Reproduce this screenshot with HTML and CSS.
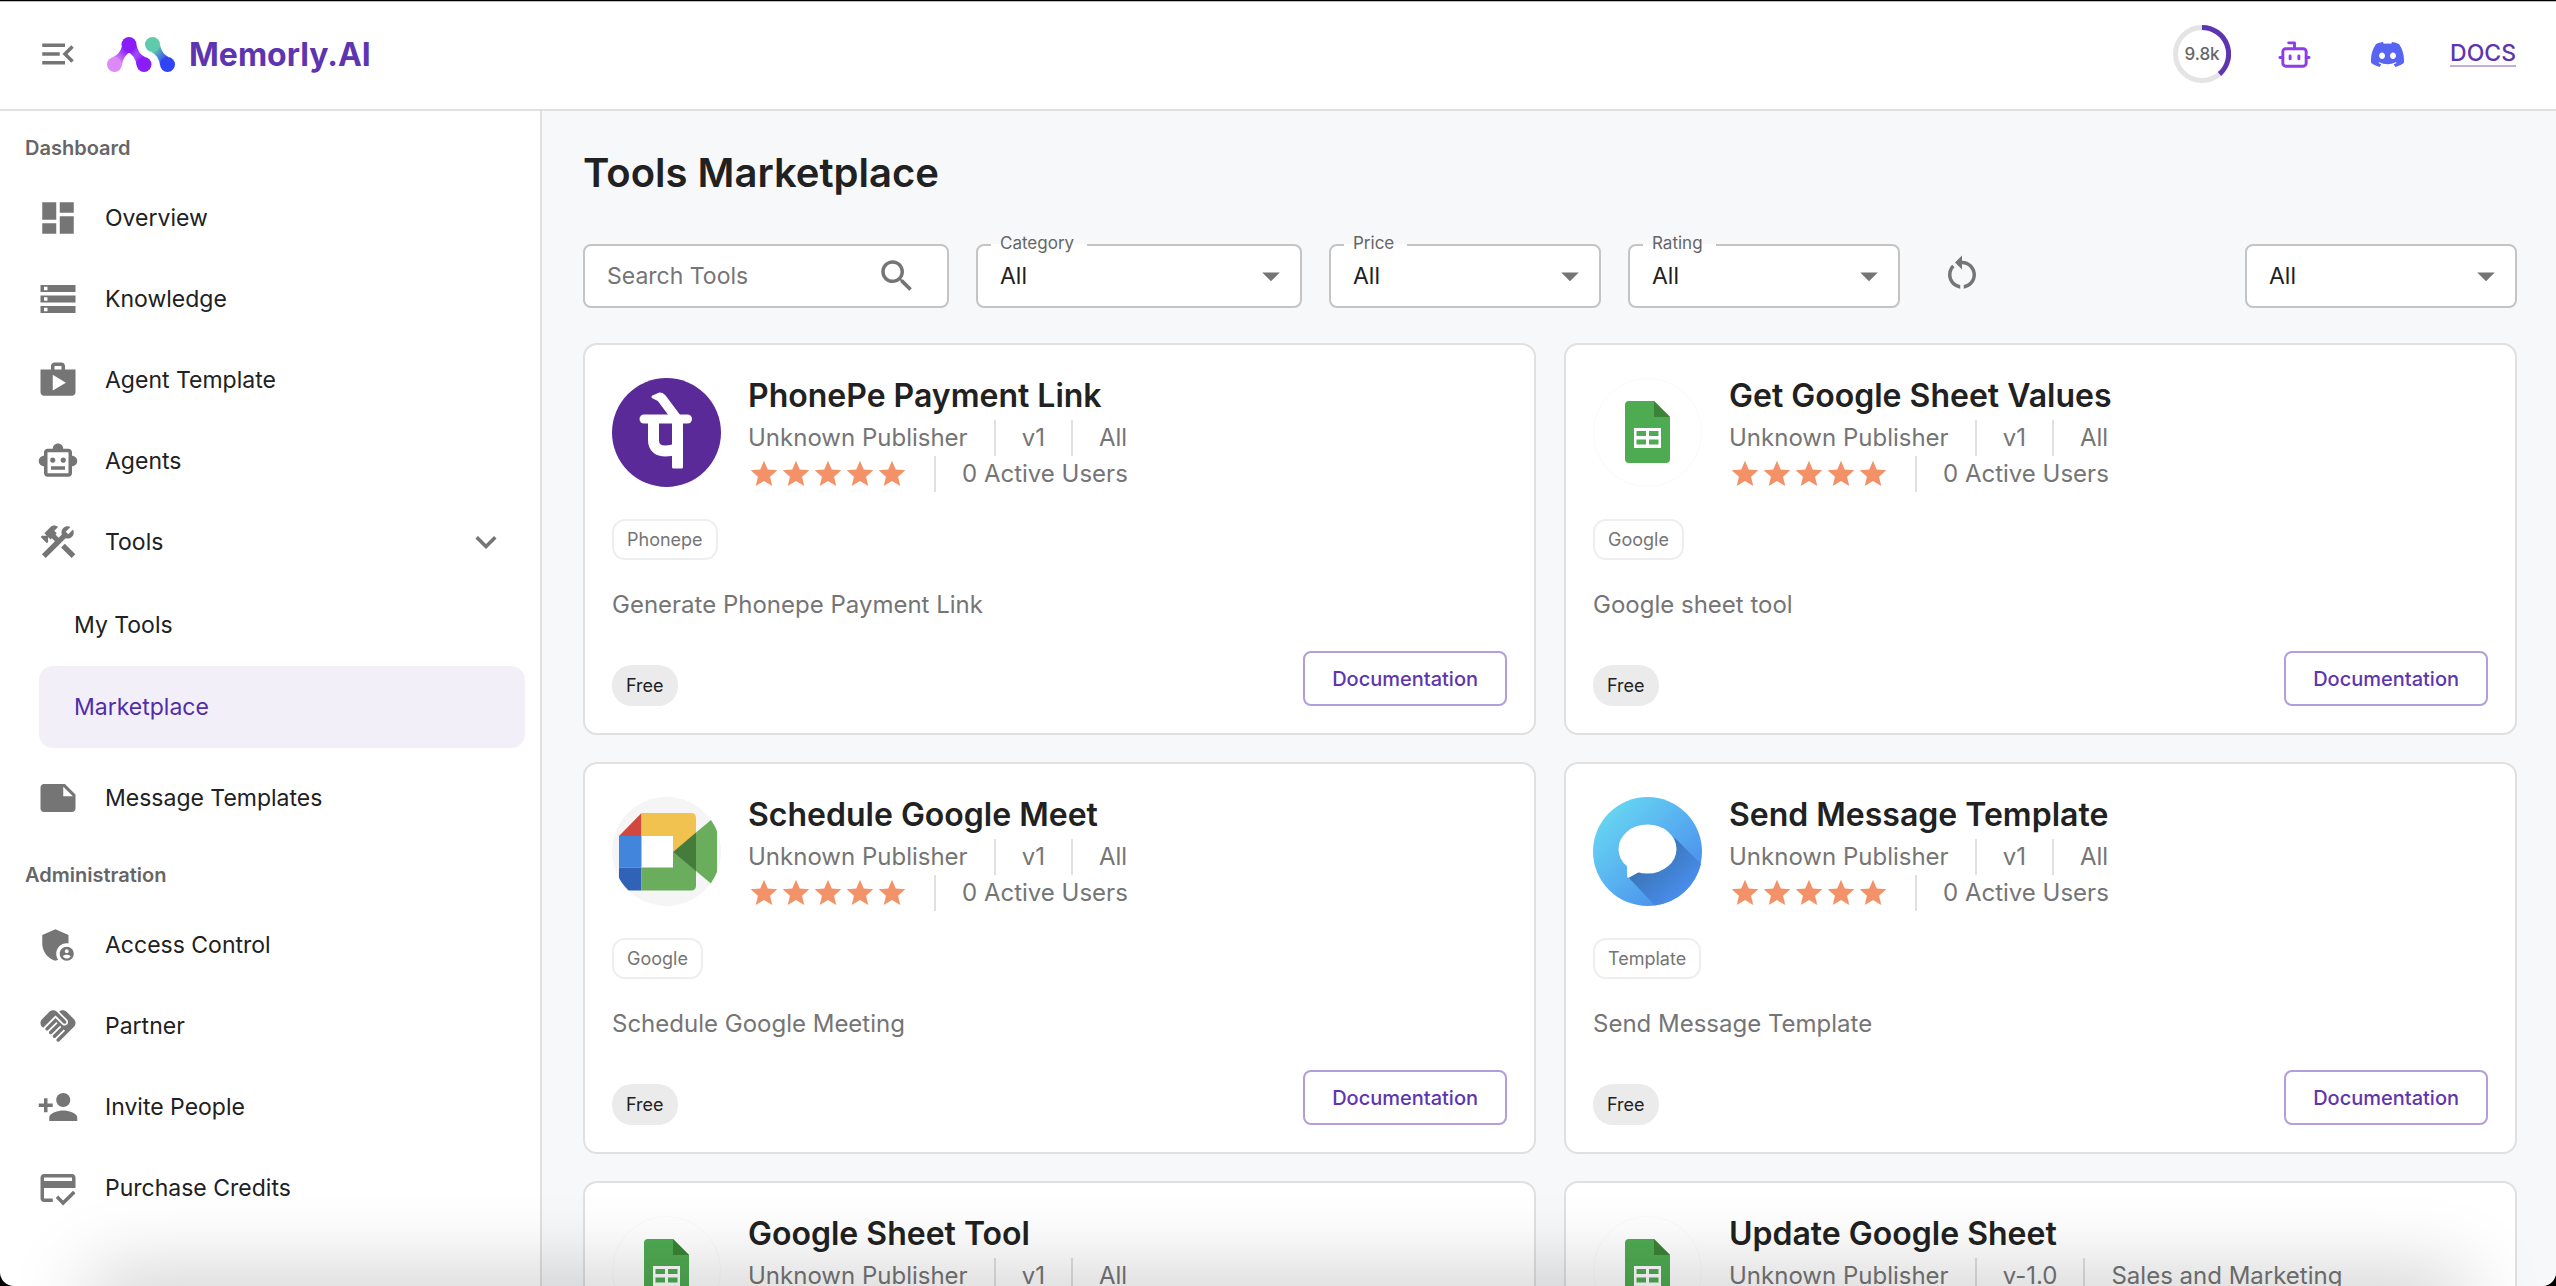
FILE: index.html
```
<!DOCTYPE html>
<html lang="en">
<head>
    <meta charset="utf-8">
    <title>Memorly.AI - Tools Marketplace</title>
    <link rel="stylesheet" href="styles.css">
</head>
<body>
    <!-- shared icons -->
    <svg class="sprite" aria-hidden="true">
        <symbol id="menu" viewBox="0 0 24 24"><path d="M3 18h13v-2H3v2zm0-5h10v-2H3v2zm0-7v2h13V6H3zm18 9.59L17.42 12 21 8.41 19.59 7l-5 5 5 5L21 15.59z"/></symbol>
        <symbol id="dashboard" viewBox="0 0 24 24"><path d="M3 13h8V3H3v10zm0 8h8v-6H3v6zm10 0h8V11h-8v10zm0-18v6h8V3h-8z"/></symbol>
        <symbol id="storage" viewBox="0 0 24 24"><path d="M2 20h20v-4H2v4zm2-3h2v2H4v-2zM2 4v4h20V4H2zm4 3H4V5h2v2zm-4 7h20v-4H2v4zm2-3h2v2H4v-2z"/></symbol>
        <symbol id="shop" viewBox="0 0 24 24"><path d="M16 6V4c0-1.11-.89-2-2-2h-4c-1.11 0-2 .89-2 2v2H2v13c0 1.11.89 2 2 2h16c1.11 0 2-.89 2-2V6h-6zm-6-2h4v2h-4V4zM9 18V9l7.5 4.5L9 18z"/></symbol>
        <symbol id="toy" viewBox="0 0 24 24"><path d="M20 9V7c0-1.1-.9-2-2-2h-3c0-1.66-1.34-3-3-3S9 3.34 9 5H6c-1.1 0-2 .9-2 2v2c-1.66 0-3 1.34-3 3s1.34 3 3 3v4c0 1.1.9 2 2 2h12c1.1 0 2-.9 2-2v-4c1.66 0 3-1.34 3-3s-1.34-3-3-3zm-2 10H6V7h12v12zm-9-6c-.83 0-1.5-.67-1.5-1.5S8.17 10 9 10s1.5.67 1.5 1.5S9.83 13 9 13zm7.5-1.5c0 .83-.67 1.5-1.5 1.5s-1.5-.67-1.5-1.5.67-1.5 1.5-1.5 1.5.67 1.5 1.5zM8 15h8v2H8v-2z"/></symbol>
        <symbol id="construction" viewBox="0 0 24 24"><path d="m13.78 15.17 2.12-2.12 6 6-2.12 2.12zM17.5 10c1.93 0 3.5-1.57 3.5-3.5 0-.58-.16-1.12-.41-1.6l-2.7 2.7-1.49-1.49 2.7-2.7c-.48-.25-1.02-.41-1.6-.41C15.57 3 14 4.57 14 6.5c0 .41.08.8.21 1.16l-1.85 1.85-1.78-1.78.71-.71-1.41-1.41L12 3.49c-1.17-1.17-3.07-1.17-4.24 0L4.22 7.03l1.41 1.41H2.81l-.71.71 3.54 3.54.71-.71V9.15l1.41 1.41.71-.71 1.78 1.78-7.41 7.41 2.12 2.12L16.34 9.79c.36.13.75.21 1.16.21z"/></symbol>
        <symbol id="note" viewBox="0 0 24 24"><path d="M22 10l-6-6H4c-1.1 0-2 .9-2 2v12.01c0 1.1.9 1.99 2 1.99l16-.01c1.1 0 2-.89 2-2v-8zm-7-4.5l5.5 5.5H15V5.5z"/></symbol>
        <symbol id="admin" viewBox="0 0 24 24"><path d="M17 11c.34 0 .67.04 1 .09V6.27L10.5 3 3 6.27v4.91c0 4.54 3.2 8.79 7.5 9.82.55-.13 1.08-.32 1.6-.55-.69-.98-1.1-2.17-1.1-3.45 0-3.31 2.69-6 6-6z"/><path d="M17 13c-2.21 0-4 1.79-4 4s1.79 4 4 4 4-1.79 4-4-1.79-4-4-4zm0 1.38c.62 0 1.12.51 1.12 1.12s-.51 1.12-1.12 1.12-1.12-.51-1.12-1.12.5-1.12 1.12-1.12zm0 5.37c-.93 0-1.74-.46-2.24-1.17.05-.72 1.51-1.08 2.24-1.08s2.19.36 2.24 1.08c-.5.71-1.31 1.17-2.24 1.17z"/></symbol>
        <symbol id="handshake" viewBox="0 0 24 24"><path d="M16.48 10.41c-.39.39-1.04.39-1.43 0l-4.47-4.46-7.05 7.04-.66-.63c-1.17-1.17-1.17-3.07 0-4.24l4.24-4.24c1.17-1.17 3.07-1.17 4.24 0L16.48 9c.39.39.39 1.02 0 1.41zm.7-2.12c.78.78.78 2.05 0 2.83-1.27 1.27-2.61.22-2.83 0l-3.76-3.76-5.57 5.57c-.39.39-.39 1.02 0 1.41s1.02.39 1.42 0l4.62-4.62.71.71-4.62 4.62c-.39.39-.39 1.02 0 1.41s1.02.39 1.42 0l4.62-4.62.71.71-4.62 4.62c-.39.39-.39 1.02 0 1.41s1.02.39 1.41 0l4.62-4.62.71.71-4.62 4.62c-.39.39-.39 1.02 0 1.41s1.02.39 1.41 0l8.32-8.34c1.17-1.17 1.17-3.07 0-4.24l-4.24-4.24c-1.15-1.15-3.01-1.17-4.18-.06l4.47 4.47z"/></symbol>
        <symbol id="person-add" viewBox="0 0 24 24"><path d="M15 12c2.21 0 4-1.79 4-4s-1.79-4-4-4-4 1.79-4 4 1.79 4 4 4zm-9-2V7H4v3H1v2h3v3h2v-3h3v-2H6zm9 4c-2.67 0-8 1.34-8 4v2h16v-2c0-2.66-5.33-4-8-4z"/></symbol>
        <symbol id="credit" viewBox="0 0 24 24"><path d="M20 4H4c-1.11 0-1.99.89-1.99 2L2 18c0 1.11.89 2 2 2h5v-2H4v-6h18V6c0-1.11-.89-2-2-2zm0 4H4V6h16v2zm-5.07 11.17l-2.83-2.83-1.41 1.41L14.93 22 22 14.93l-1.41-1.41-5.66 5.65z"/></symbol>
        <symbol id="chevron" viewBox="0 0 24 24"><path d="M16.59 8.59 12 13.17 7.41 8.59 6 10l6 6 6-6z"/></symbol>
        <symbol id="search-icon" viewBox="0 0 24 24"><path d="M15.5 14h-.79l-.28-.27C15.41 12.59 16 11.11 16 9.5 16 5.91 13.09 3 9.5 3S3 5.91 3 9.5 5.91 16 9.5 16c1.61 0 3.09-.59 4.23-1.57l.27.28v.79l5 4.99L20.49 19l-4.99-5zm-6 0C7.01 14 5 11.99 5 9.5S7.01 5 9.5 5 14 7.01 14 9.5 11.99 14 9.5 14z"/></symbol>
        <symbol id="reset" viewBox="0 0 24 24"><path d="M12 5V2L8 6l4 4V7c3.31 0 6 2.69 6 6 0 2.97-2.17 5.43-5 5.91v2.02c3.95-.49 7-3.85 7-7.93 0-4.42-3.58-8-8-8zm-6 8c0-1.65.67-3.15 1.76-4.24L6.34 7.34C4.9 8.79 4 10.79 4 13c0 4.08 3.05 7.44 7 7.93v-2.02c-2.83-.48-5-2.94-5-5.91z"/></symbol>
        <symbol id="arrow" viewBox="0 0 24 24"><path d="m7 10 5 5 5-5z"/></symbol>
        <symbol id="stars" viewBox="0 0 120 24">
            <path id="star" d="M12 17.27 18.18 21l-1.64-7.03L22 9.24l-7.19-.61L12 2 9.19 8.63 2 9.24l5.46 4.73L5.82 21z"/>
            <use href="#star" x="24"/><use href="#star" x="48"/><use href="#star" x="72"/><use href="#star" x="96"/>
        </symbol>
        <symbol id="sheet" viewBox="0 0 109 109">
            <circle cx="54.5" cy="54.5" r="54" fill="#fff" stroke="#fafafa"/>
            <path fill="#4fab52" d="M36 23h25l16 16v42a4 4 0 0 1-4 4H36a4 4 0 0 1-4-4V27a4 4 0 0 1 4-4z"/>
            <path fill="#3b8337" d="M61 23l16 16H61z"/>
            <path fill="#fff" d="M41 50h27v20H41z"/>
            <path fill="#4fab52" d="M43.500 53h9.500v5h-9.500zM56 53h9.500v5H56zM43.500 61.500h9.500v5h-9.500zM56 61.500h9.500v5H56z"/>
        </symbol>
    </svg>

    <header class="banner">
        <button class="icon-button" type="button" aria-label="Collapse menu"><svg class="icon"><use href="#menu"/></svg></button>
        <a class="brand" href="/">
            <svg class="logo" viewBox="0 0 68 35">
                <defs>
                    <linearGradient id="g1" x1="0" y1="1" x2="1" y2="0"><stop offset=".2" stop-color="#dd8af8"/><stop offset=".8" stop-color="#8a1cf7"/></linearGradient>
                    <linearGradient id="g2" x1="0" y1="0" x2="1" y2="1"><stop offset=".2" stop-color="#8a1cf7"/><stop offset=".5" stop-color="#a04af9"/><stop offset=".8" stop-color="#8a1cf7"/></linearGradient>
                    <linearGradient id="g3" x1="0" y1="0" x2="1" y2="1"><stop offset=".2" stop-color="#5fcbad"/><stop offset=".8" stop-color="#3044f6"/></linearGradient>
                </defs>
                <path fill="url(#g1)" d="M6 20q7-3 9-11l8 6q-7 4-8 13z"/>
                <path fill="url(#g2)" d="M29.500 8q2 9 8.500 12l-8.500 8q-1-9-8.500-13z"/>
                <path fill="url(#g3)" d="M53 8q2 9 8.500 12L53 28q-1-9-8.500-13z"/>
                <circle cx="7.500" cy="27.500" r="7.500" fill="#dd8af8"/>
                <circle cx="22" cy="7.500" r="7.500" fill="#8a1cf7"/>
                <circle cx="37" cy="27.500" r="7.500" fill="#8a1cf7"/>
                <circle cx="45.500" cy="7.500" r="7.500" fill="#5fcbad"/>
                <circle cx="60.500" cy="27.500" r="7.500" fill="#3044f6"/>
            </svg>
            <span>Memorly.AI</span>
        </a>
        <div class="links">
            <div class="credits">
                <svg viewBox="0 0 58 58">
                    <circle cx="29" cy="29" r="26.500" fill="none" stroke="#e4e4e4" stroke-width="5"/>
                    <path d="M29 2.500A26.500 26.500 0 0 1 46.500 49" fill="none" stroke="#5e35b1" stroke-width="5"/>
                </svg>
                <span>9.8k</span>
            </div>
            <a href="/bot" aria-label="Bot"><svg class="bot" viewBox="0 0 24 24"><path d="M12 8V4H8M2 14h2M20 14h2M15 13v2M9 13v2"/><rect x="4" y="8" width="16" height="12" rx="2"/></svg></a>
            <a href="/discord" aria-label="Discord"><svg class="discord" viewBox="0 0 24 24"><path d="M20.317 4.37a19.79 19.79 0 0 0-4.885-1.515.074.074 0 0 0-.079.037c-.21.375-.444.864-.608 1.25a18.27 18.27 0 0 0-5.487 0 12.64 12.64 0 0 0-.617-1.25.077.077 0 0 0-.079-.037A19.736 19.736 0 0 0 3.677 4.37a.07.07 0 0 0-.032.027C.533 9.046-.32 13.58.099 18.057a.082.082 0 0 0 .031.057 19.9 19.9 0 0 0 5.993 3.03.078.078 0 0 0 .084-.028 14.09 14.09 0 0 0 1.226-1.994.076.076 0 0 0-.041-.106 13.107 13.107 0 0 1-1.872-.892.077.077 0 0 1-.008-.128 10.2 10.2 0 0 0 .372-.292.074.074 0 0 1 .077-.01c3.928 1.793 8.18 1.793 12.062 0a.074.074 0 0 1 .078.01c.12.098.246.198.373.292a.077.077 0 0 1-.006.127 12.299 12.299 0 0 1-1.873.892.077.077 0 0 0-.041.107c.36.698.772 1.362 1.225 1.993a.076.076 0 0 0 .084.028 19.839 19.839 0 0 0 6.002-3.03.077.077 0 0 0 .032-.054c.5-5.177-.838-9.674-3.549-13.66a.061.061 0 0 0-.031-.03zM8.02 15.33c-1.183 0-2.157-1.085-2.157-2.419 0-1.333.956-2.419 2.157-2.419 1.21 0 2.176 1.096 2.157 2.42 0 1.333-.956 2.418-2.157 2.418zm7.975 0c-1.183 0-2.157-1.085-2.157-2.419 0-1.333.955-2.419 2.157-2.419 1.21 0 2.176 1.096 2.157 2.42 0 1.333-.946 2.418-2.157 2.418z"/></svg></a>
            <a class="docs" href="/docs">DOCS</a>
        </div>
    </header>

    <div class="page">
        <nav class="sidebar">
            <h2>Dashboard</h2>
            <a class="item" href="/overview"><svg class="icon"><use href="#dashboard"/></svg>Overview</a>
            <a class="item" href="/knowledge"><svg class="icon"><use href="#storage"/></svg>Knowledge</a>
            <a class="item" href="/agent-template"><svg class="icon"><use href="#shop"/></svg>Agent Template</a>
            <a class="item" href="/agents"><svg class="icon"><use href="#toy"/></svg>Agents</a>
            <a class="item" href="/tools"><svg class="icon"><use href="#construction"/></svg>Tools<svg class="icon chevron"><use href="#chevron"/></svg></a>
            <div class="submenu">
                <a href="/tools/my">My Tools</a>
                <a class="active" href="/tools/marketplace">Marketplace</a>
            </div>
            <a class="item" href="/message-templates"><svg class="icon"><use href="#note"/></svg>Message Templates</a>
            <h2>Administration</h2>
            <a class="item" href="/access"><svg class="icon"><use href="#admin"/></svg>Access Control</a>
            <a class="item" href="/partner"><svg class="icon"><use href="#handshake"/></svg>Partner</a>
            <a class="item" href="/invite"><svg class="icon"><use href="#person-add"/></svg>Invite People</a>
            <a class="item" href="/credits"><svg class="icon"><use href="#credit"/></svg>Purchase Credits</a>
        </nav>

        <main>
            <h1>Tools Marketplace</h1>

            <form class="filters">
                <div class="field search">
                    <input type="text" id="search" placeholder="Search Tools" aria-label="Search Tools">
                    <svg class="icon"><use href="#search-icon"/></svg>
                </div>
                <div class="field category">
                    <label for="category">Category</label>
                    <select id="category"><option>All</option></select>
                    <svg class="icon"><use href="#arrow"/></svg>
                </div>
                <div class="field">
                    <label for="price">Price</label>
                    <select id="price"><option>All</option></select>
                    <svg class="icon"><use href="#arrow"/></svg>
                </div>
                <div class="field">
                    <label for="rating">Rating</label>
                    <select id="rating"><option>All</option></select>
                    <svg class="icon"><use href="#arrow"/></svg>
                </div>
                <button class="icon-button" type="reset" aria-label="Reset filters"><svg class="icon"><use href="#reset"/></svg></button>
                <div class="field last">
                    <select id="type" aria-label="Type"><option>All</option></select>
                    <svg class="icon"><use href="#arrow"/></svg>
                </div>
            </form>

            <div class="cards">
                <article class="card">
                    <div class="card-top">
                        <svg class="avatar" viewBox="0 0 109 109">
                            <circle cx="54.500" cy="54.500" r="54.500" fill="#5a2a98"/>
                            <g fill="none" stroke="#fff">
                                <path stroke-width="9" stroke-linecap="round" stroke-linejoin="round" d="M32 41h43.500"/>
                                <path stroke-width="11" d="M41.500 42v20c0 8 5 11 12 11q5 0 11-2"/>
                                <path stroke-width="11" d="M65.500 42v46"/>
                            </g>
                            <path fill="#fff" stroke="#fff" stroke-width="3" stroke-linejoin="round" d="M41 19l7-3q2 0 4 2l15 20H59L47 22zM61.500 86h8v3h-8z"/>
                        </svg>
                        <div>
                            <h3>PhonePe Payment Link</h3>
                            <div class="meta"><span>Unknown Publisher</span><span>v1</span><span>All</span></div>
                            <div class="meta"><svg class="stars"><use href="#stars"/></svg><span>0 Active Users</span></div>
                        </div>
                    </div>
                    <span class="tag">Phonepe</span>
                    <p>Generate Phonepe Payment Link</p>
                    <div class="card-bottom"><span class="price">Free</span><button type="button">Documentation</button></div>
                </article>

                <article class="card">
                    <div class="card-top">
                        <svg class="avatar"><use href="#sheet"/></svg>
                        <div>
                            <h3>Get Google Sheet Values</h3>
                            <div class="meta"><span>Unknown Publisher</span><span>v1</span><span>All</span></div>
                            <div class="meta"><svg class="stars"><use href="#stars"/></svg><span>0 Active Users</span></div>
                        </div>
                    </div>
                    <span class="tag">Google</span>
                    <p>Google sheet tool</p>
                    <div class="card-bottom"><span class="price">Free</span><button type="button">Documentation</button></div>
                </article>

                <article class="card">
                    <div class="card-top">
                        <svg class="avatar" viewBox="0 0 109 109">
                            <clipPath id="round"><circle cx="54.500" cy="54.500" r="54.500"/></clipPath>
                            <g clip-path="url(#round)">
                                <path fill="#f5f5f5" d="M0 0h109v109H0z"/>
                                <path fill="#fff" d="M29 39h33v32H29z"/>
                                <path fill="#d1483e" d="M29.500 16v23H7z"/>
                                <path fill="#4285dc" d="M7 39h22.500v31.500H7z"/>
                                <path fill="#3063b8" d="M7 70.500h22.500v23H11q-4 0-4-4z"/>
                                <path fill="#f1c24f" d="M29.500 16H79q5 0 5 5v16L61 55V39H29.500z"/>
                                <path fill="#6aae5d" d="M29.500 70.500H61V55l23 18v15.500q0 5-5 5H29.500zM84 35.500l15-12.500q6 0 6 5v54q0 5-6 4.500L84 74z"/>
                                <path fill="#467c3b" d="M61 55l23-19.500V74z"/>
                            </g>
                        </svg>
                        <div>
                            <h3>Schedule Google Meet</h3>
                            <div class="meta"><span>Unknown Publisher</span><span>v1</span><span>All</span></div>
                            <div class="meta"><svg class="stars"><use href="#stars"/></svg><span>0 Active Users</span></div>
                        </div>
                    </div>
                    <span class="tag">Google</span>
                    <p>Schedule Google Meeting</p>
                    <div class="card-bottom"><span class="price">Free</span><button type="button">Documentation</button></div>
                </article>

                <article class="card">
                    <div class="card-top">
                        <svg class="avatar" viewBox="0 0 109 109">
                            <defs>
                                <linearGradient id="sky" x1=".1" y1=".2" x2=".8" y2=".9"><stop offset="0" stop-color="#66d3f2"/><stop offset="1" stop-color="#4a8dee"/></linearGradient>
                                <linearGradient id="shade" x1=".3" y1=".3" x2=".8" y2=".8"><stop offset="0" stop-color="#3a76b8"/><stop offset="1" stop-color="#4a8dee"/></linearGradient>
                            </defs>
                            <circle cx="54.500" cy="54.500" r="54.500" fill="url(#sky)"/>
                            <path fill="url(#shade)" d="M82 41l26 26a54.500 54.500 0 0 1-46 41.500L36 81z"/>
                            <ellipse cx="54.500" cy="52" rx="29" ry="24.500" fill="#fff"/>
                            <path fill="#fff" d="M34 65v14q0 3 3 1l11-6z"/>
                        </svg>
                        <div>
                            <h3>Send Message Template</h3>
                            <div class="meta"><span>Unknown Publisher</span><span>v1</span><span>All</span></div>
                            <div class="meta"><svg class="stars"><use href="#stars"/></svg><span>0 Active Users</span></div>
                        </div>
                    </div>
                    <span class="tag">Template</span>
                    <p>Send Message Template</p>
                    <div class="card-bottom"><span class="price">Free</span><button type="button">Documentation</button></div>
                </article>

                <article class="card">
                    <div class="card-top">
                        <svg class="avatar"><use href="#sheet"/></svg>
                        <div>
                            <h3>Google Sheet Tool</h3>
                            <div class="meta"><span>Unknown Publisher</span><span>v1</span><span>All</span></div>
                            <div class="meta"><svg class="stars"><use href="#stars"/></svg></div>
                        </div>
                    </div>
                </article>

                <article class="card">
                    <div class="card-top">
                        <svg class="avatar"><use href="#sheet"/></svg>
                        <div>
                            <h3>Update Google Sheet</h3>
                            <div class="meta"><span>Unknown Publisher</span><span>v-1.0</span><span>Sales and Marketing</span></div>
                            <div class="meta"><svg class="stars"><use href="#stars"/></svg></div>
                        </div>
                    </div>
                </article>
            </div>
        </main>
    </div>
    <div class="dock-shadow"></div>
</body>
</html>
```
FILE: styles.css
```
* {
    box-sizing: border-box;
}

html {
    background-color: #000;
}

body {
    margin: 0;
    height: 100vh;
    display: flex;
    flex-direction: column;
    overflow: hidden;
    background-color: #fff;
    border-top: 1px solid #000;
    border-radius: 0 0 14px 14px;
    font-family: Inter, "Liberation Sans", sans-serif;
    font-size: 24px;
    color: #212121;
}

a {
    color: inherit;
    text-decoration: none;
}

button,
input,
select {
    font: inherit;
    color: inherit;
}

.sprite {
    display: none;
}

.icon {
    width: 42px;
    height: 42px;
    flex: none;
    fill: #757575;
}

.icon-button {
    display: flex;
    padding: 0;
    border: none;
    background: none;
}

/* Top bar */
.banner {
    flex: none;
    height: 110px;
    display: flex;
    align-items: center;
    padding: 0 40px 3px 37px;
    border-top: 1px solid #bbb;
    border-bottom: 2px solid #e0e0e0;
}

.brand {
    display: flex;
    align-items: center;
    gap: 14px;
    margin-left: 28px;
    font-size: 32px;
    font-weight: 700;
    color: #5e35b1;
}

.logo {
    width: 68px;
    height: 35px;
}

.links {
    display: flex;
    align-items: center;
    margin-left: auto;
}

.links a {
    display: flex;
}

.credits {
    display: grid;
    place-items: center;
    margin-right: 46px;
    font-size: 17px;
    font-weight: 500;
    color: #666;
}

.credits svg,
.credits span {
    grid-area: 1 / 1;
}

.credits svg {
    width: 58px;
    height: 58px;
}

.bot {
    width: 35px;
    height: 35px;
    margin-right: 59px;
    fill: none;
    stroke: #8e3ce8;
    stroke-width: 2;
    stroke-linecap: round;
    stroke-linejoin: round;
}

.discord {
    width: 33px;
    height: 33px;
    margin-right: 46px;
    fill: #5865f2;
}

.links .docs {
    font-size: 23px;
    font-weight: 500;
    line-height: 24px;
    color: #5e35b1;
    border-bottom: 2px solid #bfaee0;
}

/* Sidebar */
.page {
    flex: 1;
    min-height: 0;
    display: flex;
}

.sidebar {
    flex: none;
    width: 542px;
    border-right: 2px solid #e0e0e0;
    font-size: 23px;
}

.sidebar h2 {
    margin: 0;
    padding: 24px 25px 16px;
    font-size: 20px;
    line-height: 26px;
    font-weight: 600;
    color: #666;
}

.item {
    display: flex;
    align-items: center;
    gap: 26px;
    height: 81px;
    padding: 0 33px 0 37px;
}

.chevron {
    margin-left: auto;
}

.submenu {
    padding: 2px 15px 9px 39px;
}

.submenu a {
    display: flex;
    align-items: center;
    height: 82px;
    padding: 0 35px;
    border-radius: 14px;
}

.submenu .active {
    background-color: #f2eff9;
    color: #512da8;
}

/* Content */
main {
    flex: 1;
    min-width: 0;
    overflow: hidden;
    padding: 34px 39px 0 41px;
    background-color: #f7f8fa;
}

h1 {
    margin: 0;
    font-size: 40px;
    line-height: 56px;
    font-weight: 600;
}

.filters {
    display: flex;
    align-items: center;
    gap: 27px;
    margin: 43px 0 35px;
}

.field {
    position: relative;
    display: flex;
    align-items: center;
    width: 272px;
    height: 64px;
    background-color: #fff;
    border: 2px solid #c4c4c4;
    border-radius: 8px;
}

.field.category {
    width: 326px;
}

.field.search {
    width: 366px;
    padding-right: 29px;
    font-size: 23px;
}

.field.last {
    margin-left: auto;
}

.field input,
.field select {
    flex: 1;
    min-width: 0;
    height: 100%;
    padding: 0 22px;
    border: none;
    outline: none;
    background: none;
    appearance: none;
}

.field input::placeholder {
    color: #757575;
    opacity: 1;
}

.field select {
    font-size: 23px;
}

.field select + .icon {
    position: absolute;
    right: 8px;
    pointer-events: none;
}

/* label sits on the border line */
.field label {
    position: absolute;
    top: -14px;
    left: 13px;
    padding: 0 13px 0 9px;
    font-size: 17px;
    line-height: 22px;
    color: #666;
    background: linear-gradient(#f7f8fa 55%, #fff 55%);
}

.filters .icon-button {
    margin-left: 14px;
    padding-bottom: 6px;
}

/* Tool cards */
.cards {
    display: grid;
    grid-template-columns: 1fr 1fr;
    gap: 27px 28px;
}

.card {
    padding: 27px;
    background-color: #fff;
    border: 2px solid #e0e0e0;
    border-radius: 14px;
}

.card-top {
    display: flex;
    align-items: center;
    gap: 27px;
    margin-bottom: 27px;
}

.avatar {
    width: 109px;
    height: 109px;
    flex: none;
}

.card h3 {
    margin: 0;
    font-size: 32px;
    line-height: 48px;
    font-weight: 600;
}

.meta {
    display: flex;
    align-items: center;
    height: 36px;
    line-height: 36px;
    color: #757575;
}

.meta * + span {
    margin-left: 26px;
    padding-left: 26px;
    border-left: 2px solid #e0e0e0;
}

.stars {
    width: 160px;
    height: 32px;
    fill: #f39268;
}

.tag,
.price {
    height: 41px;
    font-size: 18px;
    line-height: 41px;
}

.tag {
    display: block;
    width: fit-content;
    padding: 0 13px;
    border: 2px solid #eee;
    border-radius: 13px;
    line-height: 37px;
    color: #757575;
}

.card p {
    margin: 27px 0 28px;
    line-height: 36px;
    color: #757575;
}

.card-bottom {
    display: flex;
    align-items: flex-end;
    justify-content: space-between;
}

.price {
    padding: 0 14px;
    border-radius: 20px;
    background-color: #ebebeb;
}

.card-bottom button {
    height: 55px;
    padding: 0 27px;
    border: 2px solid #b39ddb;
    border-radius: 8px;
    background-color: #fff;
    font-size: 20px;
    font-weight: 500;
    color: #5e35b1;
}

/* soft shade along the bottom edge of the window */
.dock-shadow {
    position: fixed;
    left: 100px;
    right: 100px;
    bottom: -40px;
    height: 40px;
    box-shadow: 0 0 80px 10px rgba(0, 0, 0, 0.22);
    pointer-events: none;
}
```
